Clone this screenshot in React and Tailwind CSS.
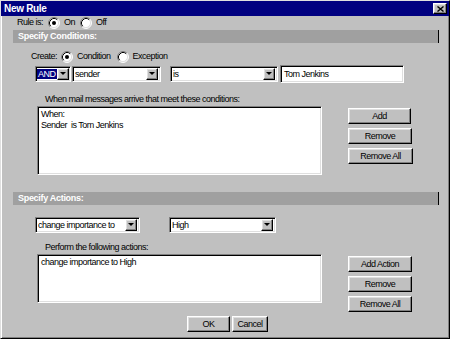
import React from 'react';

const raised =
  'bg-[#c0c0c0] border border-t-white border-l-white border-b-black border-r-black shadow-[inset_-1px_-1px_0_#808080,inset_1px_1px_0_#dfdfdf]';
const sunken =
  'bg-white border border-t-[#808080] border-l-[#808080] border-b-white border-r-white shadow-[inset_1px_1px_0_#000,inset_-1px_-1px_0_#dfdfdf]';

const Radio = ({ checked, label }) => (
  <div className="flex items-center gap-[4px]">
    <svg width="12" height="12" viewBox="0 0 12 12" className="shrink-0">
      <circle cx="6" cy="6" r="5" fill="#fff" />
      <path d="M2.11 9.89A5.5 5.5 0 0 1 9.89 2.11" fill="none" stroke="#808080" />
      <path d="M9.89 2.11A5.5 5.5 0 0 1 2.11 9.89" fill="none" stroke="#fff" />
      <path d="M2.82 9.18A4.5 4.5 0 0 1 9.18 2.82" fill="none" stroke="#000" />
      <path d="M9.18 2.82A4.5 4.5 0 0 1 2.82 9.18" fill="none" stroke="#dfdfdf" />
      {checked && <circle cx="6" cy="6" r="2" fill="#000" />}
    </svg>
    <span>{label}</span>
  </div>
);

const ArrowBtn = () => (
  <div className={`${raised} w-[12px] h-[12px] flex items-center justify-center shrink-0`}>
    <svg width="6" height="4" viewBox="0 0 6 4">
      <path d="M0 0h6L3 3z" fill="#000" />
    </svg>
  </div>
);

const Select = ({ value, width, highlight }) => (
  <div
    className={`${sunken} h-[16px] flex items-center ${highlight ? 'pl-[1px] pr-[1px]' : 'pl-[2px] pr-[2px]'}`}
    style={{ width }}
  >
    <div className="flex-1 overflow-hidden whitespace-nowrap leading-[12px]">
      {highlight ? (
        <span className="bg-[#000080] text-white px-[1px]">{value}</span>
      ) : (
        value
      )}
    </div>
    <ArrowBtn />
  </div>
);

const Button = ({ children, w = 'w-[64px]' }) => (
  <div className={`${raised} ${w} h-[16px] flex items-center justify-center leading-none`}>{children}</div>
);

const Header = ({ children }) => (
  <div className="ml-[12px] w-[426px] h-[13px] bg-[#a0a0a0] border-r border-r-black text-white font-bold tracking-[-0.3px] pl-[5px] flex items-center leading-none">
    {children}
  </div>
);

export default function App() {
  return (
    <div className="w-[450px] h-[339px] bg-[#c0c0c0] border border-t-[#dfdfdf] border-l-[#dfdfdf] border-b-black border-r-black shadow-[inset_1px_1px_0_#fff,inset_-1px_-1px_0_#808080] flex flex-col font-['Liberation_Sans',Arial,sans-serif] text-[9px] tracking-[-0.5px] text-black overflow-hidden">
      {/* title bar */}
      <div className="h-[15px] bg-[#000080] flex items-center justify-between pl-[3px] pr-[2px]">
        <span className="text-white font-bold text-[10px] tracking-[-0.3px] leading-none">New Rule</span>
        <div className={`${raised} w-[14px] h-[11px] flex items-center justify-center`}>
          <svg width="7" height="6" viewBox="0 0 7 6">
            <path d="M0.5 0.5l6 5M6.5 0.5l-6 5" stroke="#000" strokeWidth="1.4" />
          </svg>
        </div>
      </div>

      {/* rule is */}
      <div className="flex items-center gap-[5px] ml-[16px] mt-[1px] h-[12px]">
        <span>Rule is:</span>
        <Radio checked label="On" />
        <Radio label="Off" />
      </div>

      <div className="mt-[1px]">
        <Header>Specify Conditions:</Header>
      </div>

      {/* create */}
      <div className="flex items-center gap-[6px] ml-[30px] mt-[8px] h-[12px]">
        <span className="-mr-[2px]">Create:</span>
        <Radio checked label="Condition" />
        <Radio label="Exception" />
      </div>

      {/* condition row */}
      <div className="flex items-center ml-[34px] mt-[2px] h-[18px]">
        <Select value="AND" width={36} highlight />
        <div className="w-[1px]" />
        <Select value="sender" width={89} />
        <div className="w-[9px]" />
        <Select value="is" width={108} />
        <div className="w-[2px]" />
        <div className={`${sunken} w-[124px] h-[18px] flex items-center pl-[3px] leading-none`}>Tom Jenkins</div>
      </div>

      <div className="ml-[44px] mt-[11px] h-[11px] leading-[11px]">When mail messages arrive that meet these conditions:</div>

      <div className="flex ml-[36px] mt-[1px]">
        <div className={`${sunken} w-[285px] h-[69px] px-[3px] py-[2px] leading-[11px]`}>
          <div>When:</div>
          <div>Sender&nbsp; is Tom Jenkins</div>
        </div>
        <div className="flex flex-col gap-[4px] ml-[26px] mt-[2px]">
          <Button w="w-[63px]">Add</Button>
          <Button w="w-[64px]">Remove</Button>
          <Button w="w-[65px]">Remove All</Button>
        </div>
      </div>

      <div className="mt-[17px]">
        <Header>Specify Actions:</Header>
      </div>

      {/* action row */}
      <div className="flex items-center ml-[34px] mt-[12px] h-[16px]">
        <Select value="change importance to" width={105} />
        <div className="w-[29px]" />
        <Select value="High" width={107} />
      </div>

      <div className="ml-[44px] mt-[9px] h-[11px] leading-[11px]">Perform the following actions:</div>

      <div className="flex ml-[36px] mt-[1px]">
        <div className={`${sunken} w-[285px] h-[49px] px-[3px] py-[2px] leading-[11px]`}>
          <div>change importance to High</div>
        </div>
        <div className="flex flex-col gap-[4px] ml-[26px] mt-[2px]">
          <Button>Add Action</Button>
          <Button>Remove</Button>
          <Button>Remove All</Button>
        </div>
      </div>

      {/* ok cancel */}
      <div className="flex ml-[186px] mt-[4px] gap-[2px]">
        <Button w="w-[43px]">OK</Button>
        <Button w="w-[36px]">Cancel</Button>
      </div>
    </div>
  );
}
